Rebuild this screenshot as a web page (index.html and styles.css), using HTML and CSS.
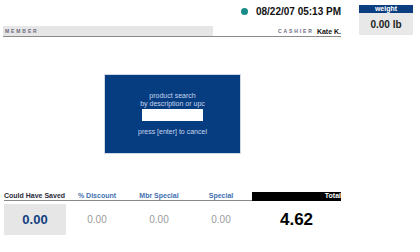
FILE: index.html
```html
<!DOCTYPE html>
<html>
<head>
<meta charset="utf-8">
<link rel="stylesheet" href="styles.css">
</head>
<body>
<div class="top">
  <div class="left">
    <div class="date-row">
      <span class="dot"></span>
      <span class="date">08/22/07 05:13 PM</span>
    </div>
    <div class="info-row">
      <div class="member"><span class="tiny">MEMBER</span></div>
      <div class="cashier"><span class="tiny">CASHIER</span><span class="name">Kate K.</span></div>
    </div>
  </div>
  <div class="weight">
    <div class="weight-head">weight</div>
    <div class="weight-body">0.00 lb</div>
  </div>
</div>
<div class="stage">
  <div class="search">
    <div class="search-label">product search<br>by description or upc</div>
    <div class="search-input"></div>
    <div class="search-cancel">press [enter] to cancel</div>
  </div>
</div>
<div class="totals">
  <div class="th th-dark">Could Have Saved</div>
  <div class="th">% Discount</div>
  <div class="th">Mbr Special</div>
  <div class="th">Special</div>
  <div class="th th-total">Total</div>
  <div class="td td-saved">0.00</div>
  <div class="td">0.00</div>
  <div class="td">0.00</div>
  <div class="td">0.00</div>
  <div class="td td-total">4.62</div>
</div>
</body>
</html>
```
FILE: styles.css
```css
html, body {
  margin: 0;
  padding: 0;
  background: #ffffff;
  font-family: "Liberation Sans", Arial, sans-serif;
  width: 420px;
  height: 252px;
  overflow: hidden;
}
.top {
  display: flex;
  padding: 5px 0 0 3px;
}
.left {
  width: 338px;
  display: flex;
  flex-direction: column;
}
.date-row {
  display: flex;
  justify-content: flex-end;
  align-items: center;
  height: 13px;
  gap: 8px;
}
.dot {
  width: 7px;
  height: 7px;
  border-radius: 50%;
  background: #1a8c88;
}
.date {
  font-weight: bold;
  font-size: 10px;
  color: #111;
}
.info-row {
  display: flex;
  margin-top: 8px;
  height: 10px;
  border-bottom: 1px solid #8a8a8a;
}
.member {
  width: 210px;
  background: #e6e6e6;
  display: flex;
  align-items: center;
  padding-left: 2px;
  box-sizing: border-box;
}
.tiny {
  font-size: 5px;
  letter-spacing: 1.9px;
  color: #6a6a80;
  font-weight: bold;
}
.cashier {
  flex: 1;
  display: flex;
  justify-content: flex-end;
  align-items: center;
  gap: 3px;
}
.name {
  font-size: 7px;
  font-weight: bold;
  color: #111;
}
.weight {
  margin-left: 18px;
  width: 54px;
  height: 30px;
  display: flex;
  flex-direction: column;
  background: #e8e8e8;
}
.weight-head {
  height: 8px;
  background: #0b3f80;
  color: #fff;
  font-size: 7px;
  font-weight: bold;
  line-height: 8px;
  text-align: center;
}
.weight-body {
  flex: 1;
  display: flex;
  align-items: center;
  justify-content: center;
  font-size: 10px;
  font-weight: bold;
  color: #222;
}
.stage {
  padding: 37px 0 0 104px;
}
.search {
  width: 135px;
  height: 78px;
  background: #063d80;
  border: 1px solid #d0d8e4;
  display: flex;
  flex-direction: column;
  align-items: center;
  justify-content: center;
  color: #c7d6ee;
  font-size: 7px;
  line-height: 8px;
  text-align: center;
}
.search-input {
  width: 61px;
  height: 12px;
  background: #fff;
  margin: 1px 0 7px;
}
.totals {
  margin-top: 38px;
  padding-left: 4px;
  display: grid;
  grid-template-columns: 62px 62px 62px 62px 89px;
  grid-template-rows: 9px auto;
}
.th {
  font-size: 7px;
  font-weight: bold;
  color: #3f70b0;
  text-align: center;
  line-height: 8px;
  white-space: nowrap;
  border-bottom: 1px solid #8a8a8a;
}
.th-dark {
  color: #2a2a3a;
  text-align: left;
}
.th-total {
  background: #000;
  color: #fff;
  text-align: right;
  border-bottom: 1px solid #000;
}
.td {
  margin-top: 3px;
  height: 31px;
  display: flex;
  align-items: center;
  justify-content: center;
  color: #9a9a9a;
  font-size: 10px;
}
.td-saved {
  background: #e6e6e6;
  color: #123f80;
  font-weight: bold;
  font-size: 13px;
}
.td-total {
  color: #000;
  font-weight: bold;
  font-size: 17px;
}
```
